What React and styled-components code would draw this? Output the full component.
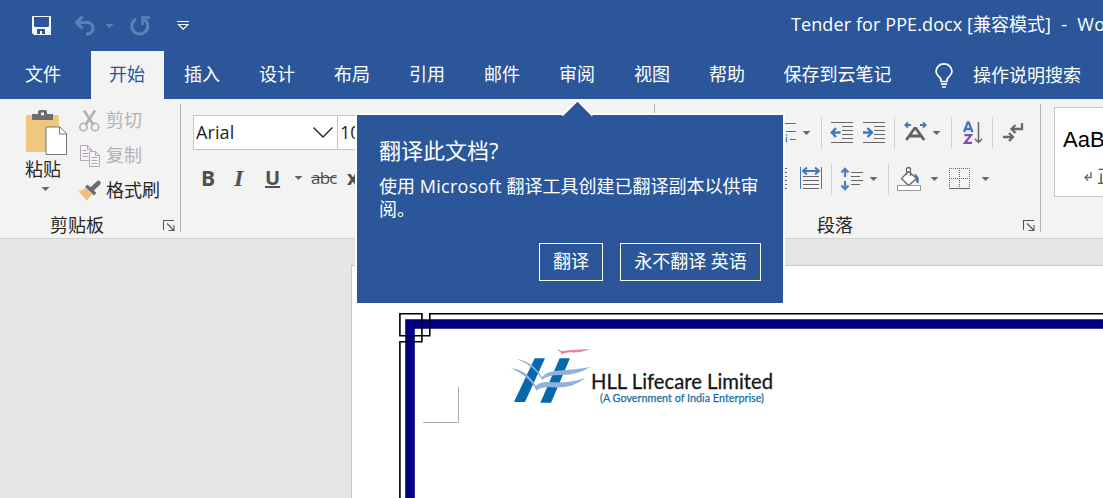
import React from 'react';
import styled, { createGlobalStyle } from 'styled-components';

const ui = '"Open Sans", "Noto Sans CJK SC", sans-serif';
const blue = '#2b579a';

const GlobalStyle = createGlobalStyle`
  * { box-sizing: border-box; }
  body { margin: 0; overflow: hidden; font-family: ${ui}; }
  svg { display: block; flex: none; overflow: visible; }
`;

const Window = styled.div`
  position: relative;
  width: 1103px;
  height: 498px;
  overflow: hidden;
  display: flex;
  flex-direction: column;
  background: #e6e6e6;
  font-size: 18px;
  color: #262626;
`;

const TitleBar = styled.header`
  flex: none;
  height: 51px;
  display: flex;
  align-items: center;
  background: ${blue};
  color: #fff;
`;

const QuickAccess = styled.div`
  flex: none;
  width: 791px;
  height: 49px;
  display: flex;
  align-items: center;
  padding-left: 32px;
`;

const Title = styled.div`
  height: 51px;
  line-height: 48px;
  white-space: pre;
`;

const Latin = styled.span`
  letter-spacing: ${(p) => p.$track || 0}px;
`;

const TabStrip = styled.nav`
  flex: none;
  height: 48px;
  display: flex;
  gap: 2px;
  background: ${blue};
  color: #fff;
`;

const Tab = styled.div`
  width: ${(p) => p.$w || 73}px;
  height: 48px;
  line-height: 46px;
  text-align: center;
  padding-right: 1px;
  white-space: nowrap;
  background: ${(p) => (p.$active ? '#f3f3f3' : 'transparent')};
  color: ${(p) => (p.$active ? blue : '#fff')};
`;

const FileTab = styled(Tab)`
  width: 89px;
  padding-right: 3px;
`;

const TellMe = styled.div`
  display: flex;
  align-items: center;
  height: 48px;
  padding-left: 23px;
  gap: 20px;
  line-height: 46px;
  white-space: nowrap;
`;

const Ribbon = styled.section`
  flex: none;
  height: 140px;
  display: flex;
  background: #f3f3f3;
  border-bottom: 1px solid #d2d2d2;
`;

const Group = styled.div`
  flex: none;
  width: ${(p) => p.$w}px;
  height: 139px;
  padding-top: 4px;
  display: flex;
  flex-direction: column;
`;

const GroupRule = styled.div`
  flex: none;
  width: 1px;
  height: 128px;
  margin-top: 5px;
  background: #b1b1b1;
`;

const GroupBody = styled.div`
  height: 109px;
  display: flex;
  flex-direction: ${(p) => (p.$stack ? 'column' : 'row')};
`;

const GroupFooter = styled.div`
  height: 26px;
  display: flex;
  align-items: center;
  justify-content: space-between;
  padding: 0 5px 0 ${(p) => p.$left}px;
  line-height: 24px;
`;

const PasteButton = styled.div`
  width: 78px;
  display: flex;
  flex-direction: column;
  padding: 6px 0 0 25px;
  line-height: 29px;

  & > svg:last-child { margin: 3px 0 0 16px; }
`;

const ClipActions = styled.div`
  display: flex;
  flex-direction: column;
`;

const ClipAction = styled.div`
  height: 35px;
  display: flex;
  align-items: center;
  gap: 4px;
  line-height: 33px;
  color: ${(p) => (p.$disabled ? '#b1b1b1' : '#262626')};
`;

const ToolRow = styled.div`
  height: ${(p) => p.$h}px;
  display: flex;
  align-items: center;
  padding-left: ${(p) => p.$left}px;
`;

const Slot = styled.div`
  flex: none;
  width: ${(p) => p.$w}px;
  margin-left: ${(p) => p.$gap || 0}px;
`;

const ToolRule = styled.div`
  flex: none;
  width: 1px;
  height: 32px;
  margin-left: ${(p) => p.$gap}px;
  background: #d0d0d0;
`;

const Combo = styled.div`
  flex: none;
  width: ${(p) => p.$w}px;
  height: 35px;
  margin-left: ${(p) => (p.$joined ? -1 : 0)}px;
  border: 1px solid #c6c6c6;
  background: #fff;
  padding: 0 4px 0 2px;
  display: flex;
  align-items: center;
  justify-content: space-between;
  line-height: 33px;
  color: #1e1e1e;
`;

const Letter = styled.span`
  flex: none;
  width: ${(p) => p.$w}px;
  font-family: ${(p) => (p.$serif ? '"Liberation Serif", serif' : ui)};
  font-style: ${(p) => (p.$serif ? 'italic' : 'normal')};
  font-weight: ${(p) => (p.$light ? 400 : 700)};
  font-size: ${(p) => p.$size || 20}px;
  letter-spacing: ${(p) => p.$track || 0}px;
  line-height: 28px;
  color: #505050;
`;

const Gallery = styled.div`
  width: 120px;
  height: 90px;
  margin: 4px 0 0 13px;
  border: 1px solid #c6c6c6;
  background: #fff;
  padding: 13px 0 0 8px;
`;

const StyleSample = styled.div`
  height: 38px;
  font: 22px/38px "Liberation Sans", Arial, sans-serif;
  color: #000;
`;

const StyleName = styled.div`
  display: flex;
  align-items: center;
  gap: 5px;
  height: 34px;
  padding: 0 0 0 21px;
  line-height: 34px;
  color: #505050;
`;

const Workspace = styled.main`
  flex: 1;
  padding: 26px 0 0 351px;
`;

const Page = styled.article`
  width: 760px;
  height: 240px;
  border: 1px solid #c6c6c6;
  background: #fff;
`;

const Callout = styled.aside`
  position: absolute;
  left: 355px;
  top: 113px;
  width: 430px;
  height: 192px;
  border: 2px solid #fff;
  padding: 20px 22px 0;
  background: ${blue};
  color: #fff;

  & > svg { position: absolute; left: 204px; top: -16px; }
`;

const CalloutTitle = styled.h2`
  margin: 0;
  font-size: 22px;
  font-weight: 400;
  line-height: 30px;
`;

const CalloutText = styled.p`
  margin: 10px -10px 0 0;
  line-height: 23px;
  white-space: nowrap;
`;

const CalloutButtons = styled.div`
  display: flex;
  justify-content: flex-end;
  gap: 17px;
  margin-top: 22px;
`;

const CalloutButton = styled.button`
  width: ${(p) => p.$w}px;
  height: 38px;
  border: 1px solid #fff;
  background: transparent;
  color: #fff;
  font: 18px/34px ${ui};
  padding: 0 0 2px;
  white-space: nowrap;
`;

const Caret = ({ color = '#666' }) => (
  <svg width="8" height="4" viewBox="0 0 8 4"><path d="M.5 0h8L4.500 4z" fill={color} /></svg>
);

const SaveIcon = () => (
  <svg width="19" height="19" viewBox="0 0 19 19">
    <path fillRule="evenodd" fill="#f3f6fa" d="M0 0h19v19H2l-2-2zM2 1v9l1 1h13l1-1V1zM5 13v5h3v-3h2v3h3v-5z" />
  </svg>
);

const UndoIcon = () => (
  <svg width="22" height="20" viewBox="0 0 22 20" fill="none" stroke="#5f82b6" strokeWidth="3">
    <path d="M3 6.500h11a5.800 5.800 0 0 1 0 11.500h-2" />
    <path d="M8.500 .5L2.500 6.500l6 6" />
  </svg>
);

const RedoIcon = () => (
  <svg width="20" height="20" viewBox="0 0 20 20" fill="none" stroke="#5f82b6" strokeWidth="3">
    <path d="M6 3a8 8 0 1 0 8.500 0.500" />
    <path d="M12.500 9V1.500H20" strokeWidth="2.600" />
  </svg>
);

const CustomizeIcon = () => (
  <svg width="12" height="10" viewBox="0 0 12 10" fill="none" stroke="#fff">
    <path d="M0 .5h12M1.500 3.500h9.500L6.200 8.200z" strokeWidth="1.100" />
  </svg>
);

const BulbIcon = () => (
  <svg width="18" height="25" viewBox="0 0 18 25" fill="none" stroke="#fff" strokeWidth="1.700">
    <path d="M6 18.500v-2C5.500 14 1 12.500 1 8.500a8 7.700 0 0 1 16 0c0 4-4.500 5.500-5 8v2zM6 21.200h6M7 24h4" />
  </svg>
);

const PasteIcon = () => (
  <svg width="42" height="46" viewBox="0 0 42 46">
    <rect x="1" y="6" width="33" height="37" rx="1.500" fill="#edc87e" />
    <path fillRule="evenodd" fill="#6d6d6d" d="M7 5h6V3q0-2 2-2h5q2 0 2 2v2h6v6H7zM16 3.500v3h3v-3z" />
    <path d="M21 18h14l6.500 6.500V45.500H21z" fill="#fff" stroke="#777" />
    <path d="M34.500 18v7h7" fill="none" stroke="#777" />
  </svg>
);

const CutIcon = () => (
  <svg width="24" height="24" viewBox="0 0 24 24" fill="none" stroke="#b1b1b1">
    <path d="M6 1.500L15.500 16M17 1.500L7.500 16" strokeWidth="2.600" />
    <circle cx="5.500" cy="18" r="3.700" strokeWidth="1.600" />
    <circle cx="17" cy="18" r="3.700" strokeWidth="1.600" />
  </svg>
);

const CopyIcon = () => (
  <svg width="24" height="24" viewBox="0 0 24 24" fill="#f7f3f7" stroke="#b4a9b4">
    <path d="M2.500 1.500h7l4 4v11h-11zM9.500 1.500v4h4" />
    <path d="M4.500 6.500h4M4.500 9.500h6M4.500 12.500h6" />
    <path d="M11.500 7.500h6l4 4v11h-10zM17.500 7.500v4h4" />
    <path d="M13.500 13.500h6M13.500 16.500h6M13.500 19.500h6" />
  </svg>
);

const BrushIcon = () => (
  <svg width="24" height="24" viewBox="0 0 24 24">
    <path d="M.5 12.500q4-1 7-3.500l7 7q-4 2-5.500 6z" fill="#edc07a" />
    <path d="M9.500 5.500l9 8.500-2.500 2.500L7 8z" fill="#6d6d6d" />
    <path d="M13.500 10.500L20.500 4" stroke="#6d6d6d" strokeWidth="4.500" strokeLinecap="round" />
  </svg>
);

const LauncherIcon = () => (
  <svg width="12" height="11" viewBox="0 0 12 11" fill="none" stroke="#555">
    <path d="M.5 10V.5H11M4 3.500l6.500 6.500M11 5v5.500H5.500" strokeWidth="1.100" />
  </svg>
);

const ListIcon = () => (
  <svg width="23" height="22" viewBox="0 0 23 22" stroke="#666">
    <path d="M8 1.500h14M12 9.500h10M16 17.500h6" />
    <path d="M12.500 13v.01M12.500 15.500v4" stroke="#4a80bd" strokeWidth="1.300" strokeLinecap="square" />
  </svg>
);

const IndentIcon = ({ right }) => (
  <svg width="22" height="22" viewBox="0 0 22 22" fill="none" stroke="#666">
    <path d="M0 .5h22M11 4.500h11M11 8.500h11M11 12.500h11M11 16.500h11M0 20.500h22" />
    <path
      d={right ? 'M0 10.500h8M4.500 6L9 10.500 4.500 15' : 'M9.500 10.500h-8M5 6L.8 10.500 5 15'}
      stroke="#3f7ab8"
      strokeWidth="2.400"
    />
  </svg>
);

const AsianLayoutIcon = () => (
  <svg width="23" height="22" viewBox="0 0 23 22" fill="none">
    <path d="M1 3h6M4 .3L1.300 3 4 5.700M16 3h6M19 .3L21.700 3 19 5.700" stroke="#3f7ab8" strokeWidth="1.800" />
    <path d="M2.300 18L10.600 6.300h1.200L20.200 18M6 14h10.500" stroke="#606060" strokeWidth="2.800" />
  </svg>
);

const SortIcon = () => (
  <svg width="20" height="24" viewBox="0 0 20 24" fill="none">
    <path d="M1 11L4.700 1.300h1L9.500 11M2.500 8h6" stroke="#3f7ab8" strokeWidth="2.300" />
    <path d="M1.500 14.200h6.500L2 21.800h7" stroke="#8550a8" strokeWidth="2.300" />
    <path d="M15.500 1v20M12 18l3.500 3.500L19 18" stroke="#666" strokeWidth="1.500" />
  </svg>
);

const MarksIcon = () => (
  <svg width="20" height="22" viewBox="0 0 20 22" fill="none" stroke="#6a6a6a" strokeWidth="2.300">
    <path d="M19 1v6H9M12.500 3L8.500 7l4 4M0 15h10M6 11l4 4-4 4" />
  </svg>
);

const JustifyIcon = () => (
  <svg width="16" height="22" viewBox="0 0 16 22" stroke="#666">
    <path d="M0 .5h14M0 4.500h14M0 8.500h14M0 12.500h14M0 16.500h14M0 20.500h14" />
  </svg>
);

const DistributeIcon = () => (
  <svg width="22" height="23" viewBox="0 0 22 23" fill="none">
    <path d="M.5 0v22M21.500 0v22" stroke="#3f7ab8" />
    <path d="M3 4h16M7 .5L3 4l4 3.500M15 .5L19 4l-4 3.500" stroke="#3f7ab8" strokeWidth="2" />
    <path d="M3 9.500h16M3 13.500h16M3 17.500h16M3 21.500h16" stroke="#666" />
  </svg>
);

const SpacingIcon = () => (
  <svg width="22" height="24" viewBox="0 0 22 24" fill="none">
    <path d="M4 2v8M.5 5.500L4 1.800l3.500 3.700M4 14v8M.5 18.500L4 22.200l3.500-3.700" stroke="#4a7fc4" strokeWidth="2.200" />
    <path d="M10 5.500h12M10 9.500h9M10 13.500h12M10 17.500h9" stroke="#666" />
  </svg>
);

const BucketIcon = () => (
  <svg width="24" height="24" viewBox="0 0 24 24" fill="none">
    <path d="M17 6.500q6 1.500 4.500 10-3.500-1-2.500-5z" fill="#3f7ab8" />
    <path d="M11.500 4.500l8 7-8 7-7-7z" fill="#fff" stroke="#666" strokeWidth="1.300" />
    <path d="M9.500 8V1.500q2-2 4 0V9" stroke="#666" strokeWidth="1.200" />
    <rect x=".5" y="18.500" width="23" height="5" fill="#fff" stroke="#999" />
  </svg>
);

const BordersIcon = () => (
  <svg width="22" height="22" viewBox="0 0 22 22" fill="none" stroke="#666">
    <path d="M0 .5h22M0 10.500h22M.5 0v20M10.500 0v20M20.500 0v20" strokeDasharray="1 1" />
    <path d="M0 20.500h21" />
  </svg>
);

const PageArt = () => (
  <svg width="751" height="232" viewBox="352 266 751 232" fill="none">
    <path d="M410 498V324h693" stroke="#000080" strokeWidth="9.600" />
    <path
      d="M1103 313.800H429.800v22H399.900v-22h22v28h-22V498"
      stroke="#000"
      strokeWidth="1.600"
    />
    <path d="M458.500 387v35.500H423" stroke="#ababab" />
    <g transform="translate(500 335) scale(.333333)">
      <path d="M104 70h31L75 201H42zM179 70h31L153 203h-32z" fill="#0768ad" />
      <path d="M50 72q50 8 76 55q10-16 44-20q54-2 102-11q-44 26-92 24q-38 0-53 15q-22-42-77-63z" fill="#92b1de" />
      <path d="M32 100q48 4 75 53q12-13 40-12q58 6 110-13q-42 34-96 29q-34-4-52 10q-18-42-77-67z" fill="#92b1de" />
      <path d="M170 42q8 0 14 7q26-5 88-7q-30 12-58 10q-16-1-28 6q-6-10-16-16z" fill="#e57fab" />
    </g>
    <text x="591" y="388.500" fill="#161616" stroke="#161616" strokeWidth=".3" fontFamily="Lato, sans-serif" fontSize="22" textLength="182" lengthAdjust="spacingAndGlyphs">HLL Lifecare Limited</text>
    <text x="600" y="402" fill="#136f9c" stroke="#136f9c" strokeWidth=".25" fontFamily="Lato, sans-serif" fontSize="12.300" textLength="164" lengthAdjust="spacingAndGlyphs">(A Government of India Enterprise)</text>
  </svg>
);

const tabs = ['插入', '设计', '布局', '引用', '邮件', '审阅', '视图', '帮助'];

export default function App() {
  return (
    <Window>
      <GlobalStyle />
      <TitleBar>
        <QuickAccess>
          <SaveIcon />
          <Slot $w={22} $gap={23}><UndoIcon /></Slot>
          <Slot $w={8} $gap={9}><Caret color="#5f82b6" /></Slot>
          <Slot $w={20} $gap={17}><RedoIcon /></Slot>
          <Slot $w={12} $gap={27}><CustomizeIcon /></Slot>
        </QuickAccess>
        <Title>
          <Latin $track={0.1}>Tender for PPE.docx [</Latin>兼容模式<Latin $track={0.3}>]  -  Word</Latin>
        </Title>
      </TitleBar>
      <TabStrip>
        <FileTab>文件</FileTab>
        <Tab $active>开始</Tab>
        {tabs.map((t) => <Tab key={t}>{t}</Tab>)}
        <Tab $w={144}>保存到云笔记</Tab>
        <TellMe><BulbIcon /><span>操作说明搜索</span></TellMe>
      </TabStrip>
      <Ribbon>
        <Group $w={180}>
          <GroupBody>
            <PasteButton>
              <PasteIcon />
              <span>粘贴</span>
              <Caret />
            </PasteButton>
            <ClipActions>
              <ClipAction $disabled><CutIcon />剪切</ClipAction>
              <ClipAction $disabled><CopyIcon />复制</ClipAction>
              <ClipAction><BrushIcon />格式刷</ClipAction>
            </ClipActions>
          </GroupBody>
          <GroupFooter $left={50}>剪贴板<LauncherIcon /></GroupFooter>
        </Group>
        <GroupRule />
        <Group $w={473}>
          <GroupBody $stack>
            <ToolRow $h={59} $left={12}>
              <Combo $w={145}>
                <Latin $track={0.1}>Arial</Latin>
                <svg width="20" height="11" viewBox="0 0 20 11"><path d="M.5.5L10 10 19.500.5" fill="none" stroke="#222" strokeWidth="1.400" /></svg>
              </Combo>
              <Combo $w={60} $joined>10</Combo>
            </ToolRow>
            <ToolRow $h={31} $left={20}>
              <Letter $w={33} $size={21}>B</Letter>
              <Letter $w={31} $serif $size={24}>I</Letter>
              <Letter $w={29}><u>U</u></Letter>
              <Slot $w={8}><Caret /></Slot>
              <Slot $w={28} $gap={9}><Letter $light $size={17} $track={-0.8}><s>abc</s></Letter></Slot>
              <Slot $w={20} $gap={8}><Letter $size={20}>x</Letter></Slot>
            </ToolRow>
          </GroupBody>
        </Group>
        <GroupRule />
        <Group $w={385}>
          <GroupBody $stack>
            <ToolRow $h={59} $left={119}>
              <ListIcon />
              <Slot $w={8} $gap={5}><Caret /></Slot>
              <ToolRule $gap={11} />
              <Slot $w={22} $gap={9}><IndentIcon /></Slot>
              <Slot $w={22} $gap={10}><IndentIcon right /></Slot>
              <ToolRule $gap={9} />
              <Slot $w={23} $gap={9}><AsianLayoutIcon /></Slot>
              <Slot $w={8} $gap={5}><Caret /></Slot>
              <ToolRule $gap={11} />
              <Slot $w={20} $gap={11}><SortIcon /></Slot>
              <ToolRule $gap={9} />
              <Slot $w={20} $gap={10}><MarksIcon /></Slot>
            </ToolRow>
            <ToolRow $h={33} $left={118}>
              <JustifyIcon />
              <Slot $w={22} $gap={11}><DistributeIcon /></Slot>
              <ToolRule $gap={9} />
              <Slot $w={22} $gap={9}><SpacingIcon /></Slot>
              <Slot $w={8} $gap={6}><Caret /></Slot>
              <ToolRule $gap={11} />
              <Slot $w={24} $gap={8}><BucketIcon /></Slot>
              <Slot $w={8} $gap={9}><Caret /></Slot>
              <Slot $w={22} $gap={11}><BordersIcon /></Slot>
              <Slot $w={8} $gap={10}><Caret /></Slot>
            </ToolRow>
          </GroupBody>
          <GroupFooter $left={162}>段落<LauncherIcon /></GroupFooter>
        </Group>
        <GroupRule />
        <Group $w={140}>
          <Gallery>
            <StyleSample>AaB</StyleSample>
            <StyleName>
              <svg width="8" height="9" viewBox="0 0 8 9" fill="none" stroke="#666" strokeWidth="1.300"><path d="M7 0v5.500H1M4 2.500l-3 3 3 3" /></svg>
              正文
            </StyleName>
          </Gallery>
        </Group>
      </Ribbon>
      <Workspace>
        <Page><PageArt /></Page>
      </Workspace>
      <Callout>
        <svg width="32" height="17" viewBox="0 0 32 17">
          <path d="M1 16.500L16.500 1.500l15 15" fill={blue} stroke="#fff" strokeWidth="2" />
          <path d="M3 17L16.500 3 30 17z" fill={blue} />
        </svg>
        <CalloutTitle>翻译此文档?</CalloutTitle>
        <CalloutText>
          使用 <Latin $track={0.3}>Microsoft</Latin> 翻译工具创建已翻译副本以供审<br />阅。
        </CalloutText>
        <CalloutButtons>
          <CalloutButton $w={64}>翻译</CalloutButton>
          <CalloutButton $w={141}>永不翻译 英语</CalloutButton>
        </CalloutButtons>
      </Callout>
    </Window>
  );
}
